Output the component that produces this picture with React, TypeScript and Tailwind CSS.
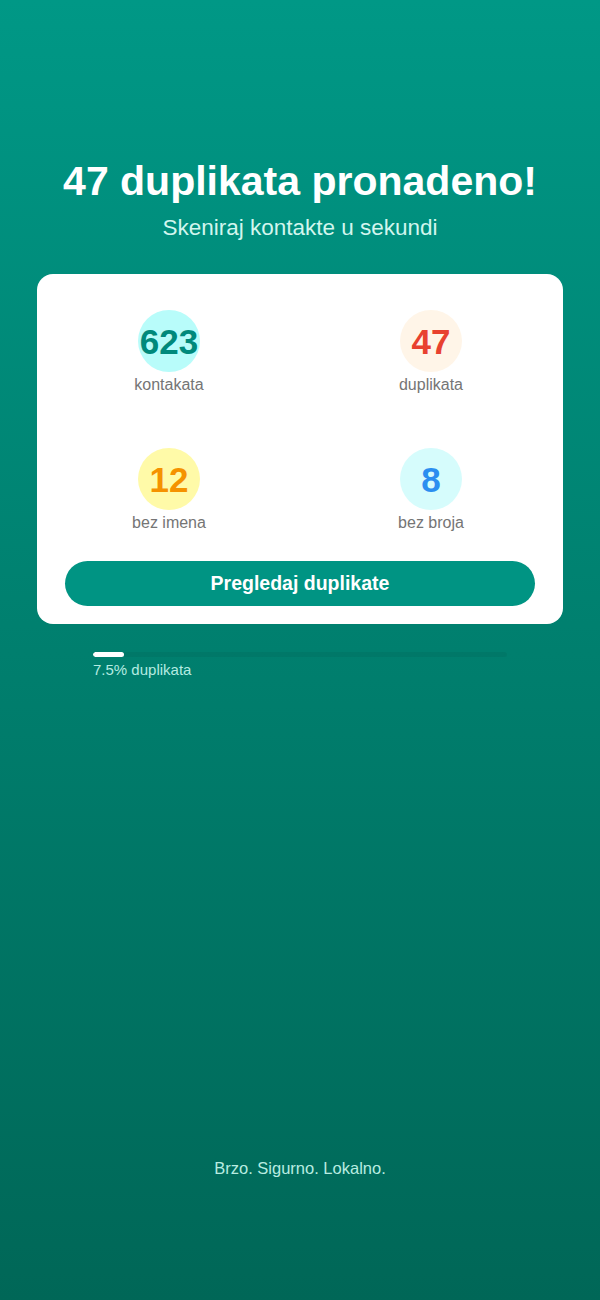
const stats = [
  { value: '623', label: 'kontakata', circle: 'bg-[#b8fcfa]', text: 'text-[#00897b]' },
  { value: '47', label: 'duplikata', circle: 'bg-[#fff5e8]', text: 'text-[#e8412f]' },
  { value: '12', label: 'bez imena', circle: 'bg-[#fffaa8]', text: 'text-[#f59200]' },
  { value: '8', label: 'bez broja', circle: 'bg-[#d6fcfc]', text: 'text-[#2b8ef0]' },
];

function StatItem({ value, label, circle, text }: (typeof stats)[number]) {
  return (
    <div className="flex flex-col items-center">
      <div className={`w-[62px] h-[62px] rounded-full flex items-center justify-center ${circle}`}>
        <span className={`text-[35px] leading-none font-bold ${text}`}>{value}</span>
      </div>
      <span className="mt-[3px] text-[16px] leading-[20px] text-[#757575]">{label}</span>
    </div>
  );
}

export default function App() {
  const percent = 7.5;

  return (
    <div
      className="min-h-[1300px] flex flex-col bg-gradient-to-b from-[#009886] to-[#006757] text-white"
      style={{ fontFamily: '"Liberation Sans", Arial, sans-serif' }}
    >
      <div className="pt-[157px] flex flex-col items-center">
        <h1 className="text-[41px] leading-[48px] font-bold">47 duplikata pronadeno!</h1>
        <p className="mt-[9px] text-[22.5px] leading-[28px] text-[#d2f6ee]">Skeniraj kontakte u sekundi</p>
      </div>

      <div className="mx-[37px] mt-[32px] bg-white rounded-2xl px-7 pt-9 pb-[18px]">
        <div className="grid grid-cols-2 gap-x-[54px] gap-y-[53px]">
          {stats.map((s) => (
            <StatItem key={s.label} {...s} />
          ))}
        </div>
        <button className="mt-7 w-full h-[45px] rounded-full bg-[#009483] text-white text-[19.5px] font-bold">
          Pregledaj duplikate
        </button>
      </div>

      <div className="mx-[93px] mt-[28px]">
        <div className="h-[5px] rounded-full bg-black/5 overflow-hidden">
          <div className="h-full rounded-full bg-white" style={{ width: `${percent}%` }} />
        </div>
        <p className="mt-[3px] text-[15px] leading-[20px] text-[#b4ebe1]">{percent}% duplikata</p>
      </div>

      <p className="mt-auto pb-[120px] text-center text-[16.5px] leading-[24px] text-[#b8ece1]">
        Brzo. Sigurno. Lokalno.
      </p>
    </div>
  );
}
